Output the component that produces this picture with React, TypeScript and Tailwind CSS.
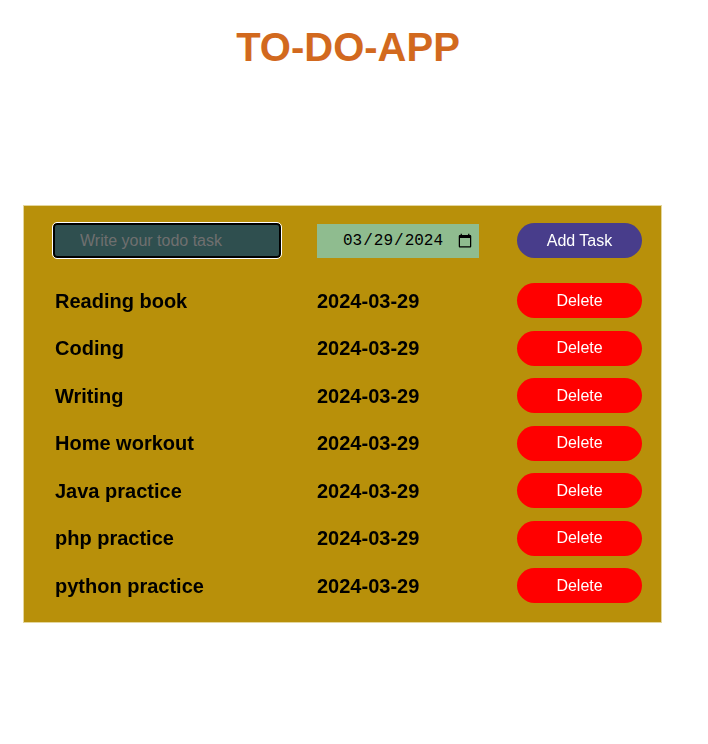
import { useState } from "react"

type Todo = { id: number; name: string; date: string }

const initialTodos: Todo[] = [
  { id: 1, name: "Reading book", date: "2024-03-29" },
  { id: 2, name: "Coding", date: "2024-03-29" },
  { id: 3, name: "Writing", date: "2024-03-29" },
  { id: 4, name: "Home workout", date: "2024-03-29" },
  { id: 5, name: "Java practice", date: "2024-03-29" },
  { id: 6, name: "php practice", date: "2024-03-29" },
  { id: 7, name: "python practice", date: "2024-03-29" },
]

export default function App() {
  const [todos, setTodos] = useState<Todo[]>(initialTodos)
  const [name, setName] = useState("")
  const [date, setDate] = useState("2024-03-29")

  function addTask() {
    if (!name.trim()) return
    setTodos([...todos, { id: Date.now(), name, date }])
    setName("")
  }

  return (
    <div className="min-h-[744px] bg-white font-['Liberation_Sans',Arial,sans-serif]">
      <h1 className="pt-[24px] pr-[12px] text-center text-[40px] font-bold leading-[46px] text-[#d2691e]">
        TO-DO-APP
      </h1>

      <div className="ml-[23px] mt-[135px] w-[639px] border border-[#e4d69c] bg-[#b8900a] pb-[19px] pl-[29px] pt-[17px]">
        {/* Input row */}
        <div className="grid h-[35px] grid-cols-[264px_200px_125px] items-center">
          <input
            autoFocus
            type="text"
            value={name}
            onChange={(e) => setName(e.target.value)}
            placeholder="Write your todo task"
            className="h-[35px] w-[228px] rounded-[4px] border-2 border-black bg-[#2f4f4f] pl-[25px] text-[16px] text-white caret-black outline outline-1 outline-white placeholder:text-[#6f6f6f]"
          />
          <input
            type="date"
            value={date}
            onChange={(e) => setDate(e.target.value)}
            className="h-[34px] w-[162px] bg-[#8fbc8f] pl-[25px] pr-[4px] font-['Liberation_Mono',monospace] text-[16px] text-black [&::-webkit-calendar-picker-indicator]:ml-[8px]"
          />
          <button
            type="button"
            onClick={addTask}
            className="h-[35px] w-[125px] rounded-full bg-[#483d8b] text-[16px] text-white"
          >
            Add Task
          </button>
        </div>

        {/* Todo rows */}
        <div className="mt-[25px] flex flex-col gap-[12.5px]">
          {todos.map((todo) => (
            <div
              key={todo.id}
              className="grid h-[35px] grid-cols-[264px_200px_125px] items-center"
            >
              <span className="pl-[2px] text-[20px] font-bold text-black">{todo.name}</span>
              <span className="text-[20px] font-bold text-black">{todo.date}</span>
              <button
                type="button"
                onClick={() => setTodos(todos.filter((t) => t.id !== todo.id))}
                className="h-[35px] w-[125px] rounded-full bg-[#ff0000] text-[16px] text-white"
              >
                Delete
              </button>
            </div>
          ))}
        </div>
      </div>
    </div>
  )
}
